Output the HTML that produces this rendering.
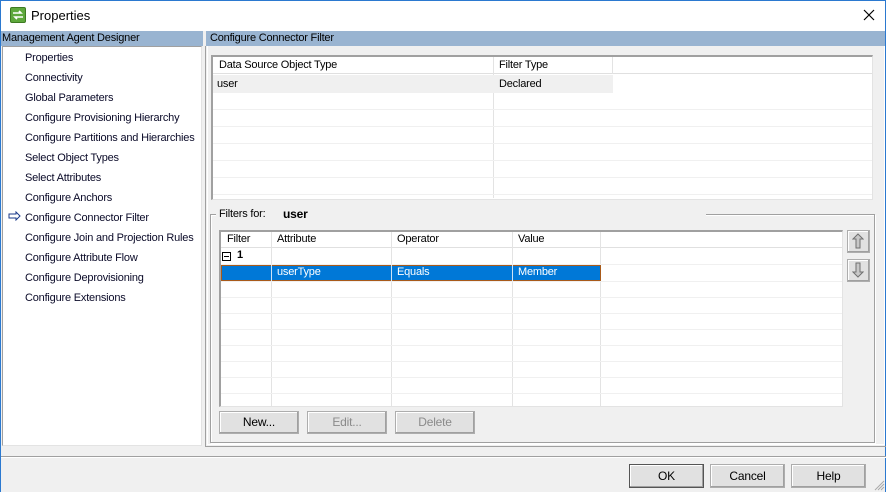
<!DOCTYPE html>
<html><head><meta charset="utf-8"><style>
*{margin:0;padding:0;box-sizing:border-box}
body{width:886px;height:492px;overflow:hidden;background:#f0f0f0;font-family:"Liberation Sans",sans-serif;font-size:11px;letter-spacing:-0.2px;color:#000;position:relative}
.a{position:absolute}
.t{position:absolute;white-space:nowrap}
.btn{position:absolute;background:#e1e1e1;border:1px solid #adadad;box-shadow:inset -1px -1px 0 #a0a0a0,inset 1px 1px 0 #fff;text-align:center;font-size:12px}
.hl{position:absolute;height:1px;background:#f0f0f0}
.vl{position:absolute;width:1px;background:#f0f0f0}
</style></head><body>
<div class="a" style="left:0;top:0;width:886px;height:492px;border:1px solid #2b79d0;border-bottom:none"></div>
<div class="a" style="left:1px;top:1px;width:884px;height:30px;background:#fff"></div>
<div class="a" style="left:10px;top:7px;width:16px;height:16px;background:#5ea83c;border:1px solid #3d7a22;border-radius:2px"></div>
<svg class="a" style="left:12px;top:9px" width="12" height="12" viewBox="0 0 12 12"><path d="M1 4H9L7 2M11 8H3L5 10" stroke="#fff" stroke-width="1.6" fill="none"/></svg>
<div class="t" style="left:31px;top:8px;font-size:13px;letter-spacing:0">Properties</div>
<svg class="a" style="left:863px;top:9px" width="12" height="12"><path d="M1 1L11 11M11 1L1 11" stroke="#000" stroke-width="1.2"/></svg>

<div class="a" style="left:1px;top:31px;width:202px;height:15px;background:#99b4d1"></div>
<div class="t" style="left:2px;top:32px">Management Agent Designer</div>
<div class="a" style="left:206px;top:31px;width:679px;height:15px;background:#99b4d1"></div>
<div class="t" style="left:210px;top:32px">Configure Connector Filter</div>

<div class="a" style="left:2px;top:46px;width:200px;height:400px;background:#fff;border:1px solid #a0a0a0;border-right-color:#e3e3e3;border-bottom-color:#e3e3e3"></div>
<div style="position:absolute;left:25px;top:48px;line-height:20px;color:#0a0a28">
Properties<br>Connectivity<br>Global Parameters<br>Configure Provisioning Hierarchy<br>Configure Partitions and Hierarchies<br>Select Object Types<br>Select Attributes<br>Configure Anchors<br>Configure Connector Filter<br>Configure Join and Projection Rules<br>Configure Attribute Flow<br>Configure Deprovisioning<br>Configure Extensions</div>
<svg class="a" style="left:8px;top:211px" width="14" height="10"><path d="M1 3H8V1L12 5L8 9V7H1Z" fill="#fff" stroke="#1a3a8a" stroke-width="1"/></svg>

<div class="a" style="left:205px;top:46px;width:681px;height:401px;border-left:1px solid #a0a0a0;border-bottom:1px solid #a0a0a0"></div>
<div class="a" style="left:207px;top:46px;width:678px;height:399px;border:1px solid #fff;border-top:none"></div>

<div class="a" style="left:211px;top:55px;width:662px;height:145px;background:#fff;border:2px solid #a0a0a0;border-right:1px solid #e3e3e3;border-bottom:1px solid #e3e3e3"></div>
<div class="a" style="left:213px;top:57px;width:659px;height:17px;border-bottom:1px solid #e0e0e0"></div>
<div class="vl" style="left:493px;top:57px;height:141px;background:#e3e3e3"></div>
<div class="vl" style="left:612px;top:57px;height:17px;background:#e3e3e3"></div>
<div class="t" style="left:219px;top:59px">Data Source Object Type</div>
<div class="t" style="left:499px;top:59px">Filter Type</div>
<div class="a" style="left:213px;top:75px;width:400px;height:18px;background:#f0f0f0"></div>
<div class="t" style="left:217px;top:78px">user</div>
<div class="t" style="left:499px;top:78px">Declared</div>
<div class="hl" style="left:213px;top:109px;width:659px"></div>
<div class="hl" style="left:213px;top:126px;width:659px"></div>
<div class="hl" style="left:213px;top:143px;width:659px"></div>
<div class="hl" style="left:213px;top:160px;width:659px"></div>
<div class="hl" style="left:213px;top:177px;width:659px"></div>
<div class="hl" style="left:213px;top:194px;width:659px"></div>

<div class="a" style="left:210px;top:214px;width:665px;height:229px;border:1px solid #a0a0a0;box-shadow:1px 1px 0 #fff,inset 1px 1px 0 #fff"></div>
<div class="a" style="left:216px;top:207px;width:490px;height:14px;background:#f0f0f0"></div>
<div class="t" style="left:219px;top:208px">Filters for:</div>
<div class="t" style="left:283px;top:207px;font-weight:bold;font-size:12px">user</div>

<div class="a" style="left:219px;top:230px;width:624px;height:177px;background:#fff;border:2px solid #a0a0a0;border-right:1px solid #e3e3e3;border-bottom:1px solid #e3e3e3"></div>
<div class="a" style="left:221px;top:232px;width:621px;height:16px;border-bottom:1px solid #e0e0e0"></div>
<div class="vl" style="left:271px;top:232px;height:174px;background:#e3e3e3"></div>
<div class="vl" style="left:391px;top:232px;height:174px;background:#e3e3e3"></div>
<div class="vl" style="left:512px;top:232px;height:174px;background:#e3e3e3"></div>
<div class="vl" style="left:600px;top:232px;height:174px;background:#e3e3e3"></div>
<div class="t" style="left:227px;top:233px">Filter</div>
<div class="t" style="left:277px;top:233px">Attribute</div>
<div class="t" style="left:397px;top:233px">Operator</div>
<div class="t" style="left:518px;top:233px">Value</div>
<div class="a" style="left:222px;top:252px;width:9px;height:9px;border:1px solid #000"></div>
<div class="a" style="left:224px;top:256px;width:5px;height:1px;background:#000"></div>
<div class="t" style="left:237px;top:249px;font-weight:bold">1</div>
<div class="hl" style="left:221px;top:264px;width:621px"></div>
<div class="a" style="left:221px;top:265px;width:380px;height:16px;background:#0078d7;border:1px solid #a85a1a"></div>
<div class="a" style="left:271px;top:265px;width:1px;height:16px;background:#cfe3f5"></div>
<div class="a" style="left:391px;top:265px;width:1px;height:16px;background:#cfe3f5"></div>
<div class="a" style="left:512px;top:265px;width:1px;height:16px;background:#cfe3f5"></div>
<div class="t" style="left:277px;top:266px;color:#fff">userType</div>
<div class="t" style="left:397px;top:266px;color:#fff">Equals</div>
<div class="t" style="left:518px;top:266px;color:#fff">Member</div>
<div class="hl" style="left:221px;top:281px;width:621px"></div>
<div class="hl" style="left:221px;top:297px;width:621px"></div>
<div class="hl" style="left:221px;top:313px;width:621px"></div>
<div class="hl" style="left:221px;top:329px;width:621px"></div>
<div class="hl" style="left:221px;top:345px;width:621px"></div>
<div class="hl" style="left:221px;top:361px;width:621px"></div>
<div class="hl" style="left:221px;top:377px;width:621px"></div>
<div class="hl" style="left:221px;top:393px;width:621px"></div>

<div class="btn" style="left:847px;top:230px;width:23px;height:23px"></div>
<svg class="a" style="left:852px;top:233px" width="12" height="16"><path d="M6 1L11 6H8V15H4V6H1Z" fill="#c8c8c8" stroke="#707070"/></svg>
<div class="btn" style="left:847px;top:259px;width:23px;height:23px"></div>
<svg class="a" style="left:852px;top:262px" width="12" height="16"><path d="M6 15L11 10H8V1H4V10H1Z" fill="#c8c8c8" stroke="#707070"/></svg>

<div class="btn" style="left:219px;top:411px;width:80px;height:23px;line-height:21px">New...</div>
<div class="btn" style="left:307px;top:411px;width:80px;height:23px;line-height:21px;color:#8a8a8a">Edit...</div>
<div class="btn" style="left:395px;top:411px;width:80px;height:23px;line-height:21px;color:#8a8a8a">Delete</div>

<div class="a" style="left:1px;top:456px;width:885px;height:1px;background:#a0a0a0"></div>
<div class="a" style="left:1px;top:457px;width:885px;height:1px;background:#fff"></div>

<div class="btn" style="left:629px;top:464px;width:75px;height:24px;line-height:22px;border:1px solid #555">OK</div>
<div class="btn" style="left:710px;top:464px;width:75px;height:24px;line-height:22px">Cancel</div>
<div class="btn" style="left:791px;top:464px;width:75px;height:24px;line-height:22px">Help</div>
<svg class="a" style="left:873px;top:479px" width="12" height="12"><path d="M11 2L2 11M11 5L5 11M11 8L8 11" stroke="#aaa"/></svg>
</body></html>
